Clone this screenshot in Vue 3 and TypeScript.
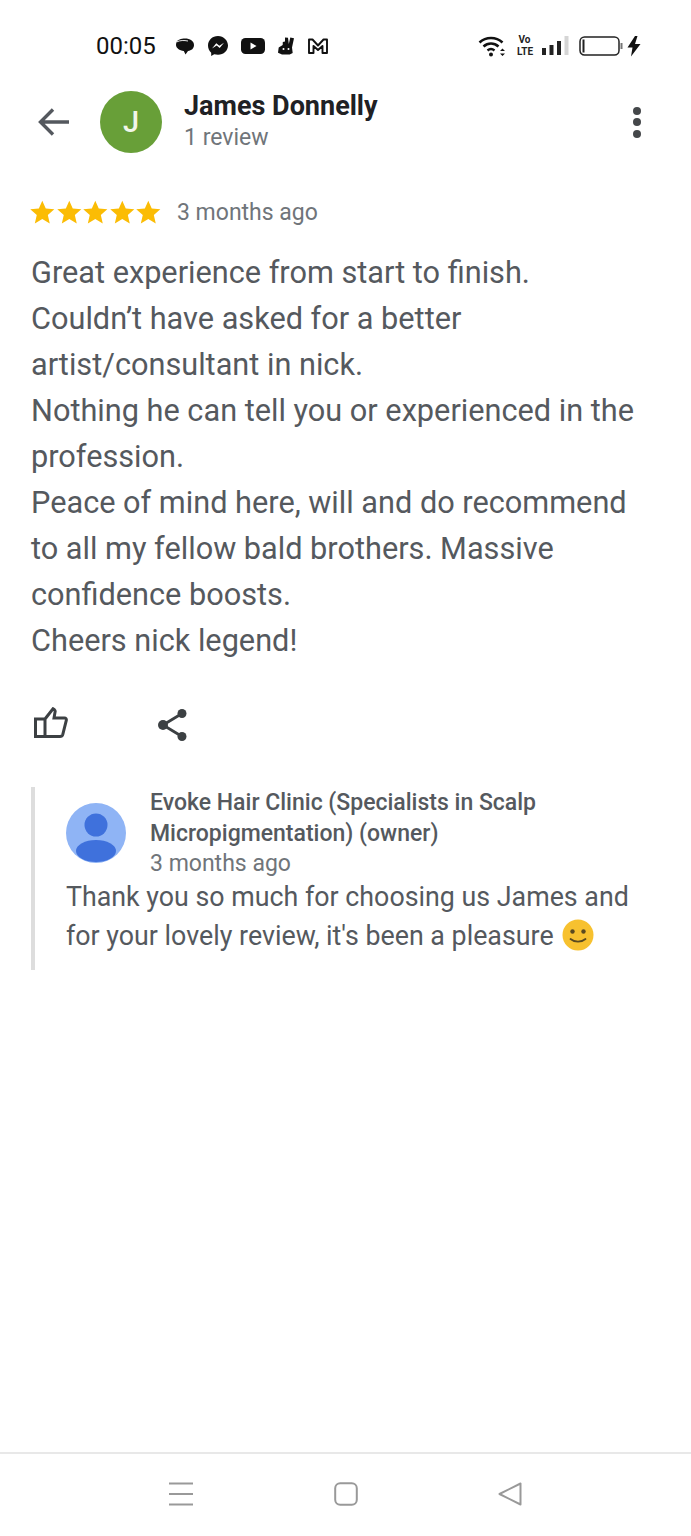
<template>
  <div class="screen">
    <div class="status">
      <span class="time">00:05</span>
      <div class="apps">
        <svg width="20" height="20" viewBox="0 0 20 20"><path d="M1.500 6.500C2.500 3.500 6 2.500 10 2.500c5 0 9 2.500 9 6.500 0 3.500-2.500 5.500-6 6L10.500 18.500 8.800 15C4.500 14.500 1 12 1 9c0-1 .1-1.800.5-2.500z" fill="#111"/><path d="M2 5.800C5 4.300 9 4.200 13 5" stroke="#fff" stroke-width=".9" fill="none"/></svg>
        <svg width="22" height="22" viewBox="0 0 22 22"><path d="M11 1C5.300 1 1 5.100 1 10.600c0 2.900 1.200 5.400 3.200 7.100V21l3-1.700c1.200.3 2.500.5 3.800.5 5.700 0 10-4.100 10-9.200S16.700 1 11 1z" fill="#111"/><path d="M5 13.500l4.300-5.200 3 2.500 4.700-3-4.300 5.300-3-2.500z" fill="#fff"/></svg>
        <svg width="24" height="18" viewBox="0 0 24 18"><rect y="1" width="24" height="16" rx="4.500" fill="#111"/><path d="M9.500 5.500v7l6-3.500z" fill="#fff"/></svg>
        <svg width="18" height="20" viewBox="0 0 18 20"><path d="M8 1.500l3 .3.800 6.200 1.500-6.500 3.700.7-2 9.300.7 5.500-3 1.500H5l-4-1.800.7-5.200 4-2.500L5.800 6 8 5.500z" fill="#111"/><circle cx="6.500" cy="13" r="1" fill="#fff"/><circle cx="11.500" cy="13" r="1" fill="#fff"/></svg>
        <svg width="22" height="18" viewBox="0 0 22 18"><path d="M2 16V2.500h3.500L11 8.500l5.500-6H20V16h-4.500V9L11 13 6.500 9v7z" fill="none" stroke="#111" stroke-width="1.900" stroke-linejoin="round"/></svg>
      </div>
      <div class="sys">
        <svg width="30" height="24" viewBox="0 0 30 24"><path d="M1.500 8.500C8 2.500 18 2.500 24.500 8.500" fill="none" stroke="#111" stroke-width="2.600"/><path d="M5.500 12.500c4.500-4 10.500-4 15 0" fill="none" stroke="#111" stroke-width="2.600"/><path d="M9.500 16.500c2.300-2 4.700-2 7 0" fill="none" stroke="#111" stroke-width="2.400"/><circle cx="13" cy="20.500" r="2" fill="#111"/><path d="M22 17l2.500-2.500L27 17zM22 19.500h5L24.500 22z" fill="#111"/></svg>
        <span class="volte">Vo<br>LTE</span>
        <svg class="signal" width="27" height="20" viewBox="0 0 27 20"><rect x="0" y="12" width="4" height="7" fill="#222"/><rect x="7.500" y="9" width="4" height="10" fill="#222"/><rect x="15" y="5" width="4" height="14" fill="#222"/><rect x="22.500" y="0" width="4" height="19" fill="#d5d5d5"/></svg>
        <svg class="battery" width="45" height="22" viewBox="0 0 45 22"><rect x="1" y="2" width="39" height="18" rx="4.500" fill="none" stroke="#222" stroke-width="1.500"/><rect x="3.500" y="4.500" width="2" height="13" fill="#222"/><rect x="41.500" y="8" width="2" height="6" fill="#777"/></svg>
        <svg class="bolt" width="14" height="22" viewBox="0 0 14 22"><path d="M8 1L.5 12.500h5L4 21.500 13.500 9H8L10.500 1z" fill="#111"/></svg>
      </div>
    </div>

    <header class="head">
      <svg class="back" width="34" height="32" viewBox="0 0 34 32"><path d="M32 16H4M16 3.500L3.500 16 16 28.500" fill="none" stroke="#54585e" stroke-width="3.400"/></svg>
      <div class="avatar">J</div>
      <div class="who">
        <div class="name">James Donnelly</div>
        <div class="count">1 review</div>
      </div>
      <div class="dots"><i></i><i></i><i></i></div>
    </header>

    <main class="review">
      <div class="rating">
        <div class="stars">
          <svg v-for="n in 5" :key="n" width="26.600" height="26" viewBox="0 0 24 24"><path d="M12 1.500l3.200 7.300 7.900.7-6 5.200 1.800 7.800L12 18.400l-6.900 4.100 1.800-7.800-6-5.200 7.900-.7z" fill="#fbbc04"/></svg>
        </div>
        <span class="ago">3 months ago</span>
      </div>
      <p class="body">
        <span v-for="line in lines" :key="line" class="line">{{ line }}</span>
      </p>
      <div class="actions">
        <svg class="thumb" width="34" height="32" viewBox="0 0 34 32"><path d="M1.500 12h9.500v17.500H1.500zM11 12L19 1.800l1.500 1c.6.500.8 1.200.6 2L20 11h10.500c1.300 0 2.100 1.100 1.800 2.300l-3.500 14c-.4 1.400-1.300 2.200-2.800 2.200H11" fill="none" stroke="#3c4043" stroke-width="3"/></svg>
        <svg width="32" height="34" viewBox="0 0 32 34"><path d="M26 6.500L7 18l19 11.500" fill="none" stroke="#3c4043" stroke-width="2.800"/><circle cx="26" cy="6.500" r="4.500" fill="#3c4043"/><circle cx="7" cy="18" r="5" fill="#3c4043"/><circle cx="26" cy="29.500" r="4.500" fill="#3c4043"/></svg>
      </div>

      <section class="reply">
        <div class="owner">
          <svg class="owner-pic" width="60" height="60" viewBox="0 0 60 60"><circle cx="30" cy="30" r="30" fill="#8fb4f5"/><circle cx="30" cy="22" r="11.500" fill="#3f71dc"/><ellipse cx="30" cy="48" rx="20" ry="11" fill="#3f71dc"/></svg>
          <div>
            <div class="biz">Evoke Hair Clinic (Specialists in Scalp Micropigmentation) (owner)</div>
            <div class="reply-ago">3 months ago</div>
          </div>
        </div>
        <p class="reply-text">Thank you so much for choosing us James and for your lovely review, it's been a pleasure
          <svg class="smile" width="32" height="32" viewBox="0 0 32 32"><circle cx="16" cy="16" r="15.500" fill="#f7c12f"/><circle cx="10.500" cy="12.500" r="2.200" fill="#5a4a20"/><circle cx="21.500" cy="12.500" r="2.200" fill="#5a4a20"/><path d="M8.500 20c4 3.500 11 3.500 15 0" fill="none" stroke="#5a4a20" stroke-width="1.800" stroke-linecap="round"/></svg>
        </p>
      </section>
    </main>

    <nav class="nav">
      <svg width="24" height="24" viewBox="0 0 24 24"><path d="M0 1.500h24M0 12h24M0 22.500h24" stroke="#999" stroke-width="2"/></svg>
      <svg width="24" height="24" viewBox="0 0 24 24"><rect x="1.200" y="1.200" width="21.600" height="21.600" rx="5" fill="none" stroke="#999" stroke-width="2"/></svg>
      <svg width="24" height="24" viewBox="0 0 24 24"><path d="M22.500 1.500v21L1.500 12z" fill="none" stroke="#999" stroke-width="2" stroke-linejoin="round"/></svg>
    </nav>
  </div>
</template>

<script setup lang="ts">
const lines: string[] = [
  'Great experience from start to finish.',
  'Couldn’t have asked for a better',
  'artist/consultant in nick.',
  'Nothing he can tell you or experienced in the',
  'profession.',
  'Peace of mind here, will and do recommend',
  'to all my fellow bald brothers. Massive',
  'confidence boosts.',
  'Cheers nick legend!'
]
</script>

<style>
html, body {
  margin: 0;
  background: #fff;
}
</style>

<style scoped>
.screen {
  display: flex;
  flex-direction: column;
  height: 1536px;
  background: #fff;
  font-family: Roboto, "Liberation Sans", sans-serif;
  overflow: hidden;
}

.status {
  display: flex;
  align-items: center;
  height: 92px;
  padding: 0 50px 0 96px;
  color: #111;
  flex: none;
}

.time {
  font-size: 24px;
  width: 79px;
}

.apps {
  display: flex;
  align-items: center;
  gap: 12px;
}

.sys {
  display: flex;
  align-items: center;
  margin-left: auto;
}

.volte {
  width: 15px;
  margin-left: 9px;
  font-size: 10px;
  line-height: 11.800px;
  font-weight: 700;
  text-align: center;
  color: #222;
}

.signal {
  margin-left: 10px;
}

.battery {
  margin-left: 10px;
}

.bolt {
  margin-left: 3px;
}

.head {
  display: flex;
  align-items: center;
  height: 60px;
  padding: 0 50px 0 37px;
  flex: none;
}

.back {
  flex: none;
}

.avatar {
  width: 62px;
  height: 62px;
  margin-left: 29px;
  border-radius: 50%;
  background: #689f38;
  color: #f1f6ea;
  font-size: 29px;
  font-weight: 500;
  line-height: 62px;
  text-align: center;
}

.who {
  margin-left: 22px;
}

.name {
  font-size: 27px;
  font-weight: 700;
  line-height: 30px;
  margin-bottom: 2px;
  color: #202124;
}

.count {
  font-size: 23px;
  line-height: 30px;
  color: #70757a;
}

.dots {
  display: flex;
  flex-direction: column;
  gap: 3.500px;
  margin-left: auto;
}

.dots i {
  display: block;
  width: 8px;
  height: 8px;
  border-radius: 50%;
  background: #44474a;
}

.review {
  padding: 0 31px;
  flex: 1;
}

.rating {
  display: flex;
  align-items: center;
  margin-top: 43px;
  height: 34px;
}

.stars {
  display: flex;
  margin-left: -2px;
  margin-right: 15px;
}

.ago {
  font-size: 23px;
  color: #70757a;
}

.body {
  margin: 21px 0 0;
  font-size: 30.700px;
  line-height: 46px;
  color: #55595e;
}

.line {
  display: block;
}

.actions {
  display: flex;
  align-items: flex-start;
  gap: 88px;
  margin-top: 43px;
}

.thumb {
  margin-left: 3px;
}

.reply {
  margin-top: 46px;
  padding: 0 20px 14px 31px;
  border-left: 4px solid #dddddd;
}

.owner {
  display: flex;
  align-items: center;
  gap: 24px;
}

.owner-pic {
  flex: none;
}

.biz {
  font-size: 23px;
  font-weight: 500;
  line-height: 31px;
  color: #55595e;
}

.reply-ago {
  font-size: 23px;
  line-height: 30px;
  color: #70757a;
}

.reply-text {
  margin: -1px 0 0;
  font-size: 26.800px;
  line-height: 39px;
  color: #55595e;
}

.smile {
  vertical-align: -6px;
  margin-left: 2px;
}

.nav {
  display: flex;
  align-items: center;
  justify-content: space-between;
  height: 79px;
  padding: 0 169px 3px;
  border-top: 2px solid #e8e8e8;
  flex: none;
}
</style>
